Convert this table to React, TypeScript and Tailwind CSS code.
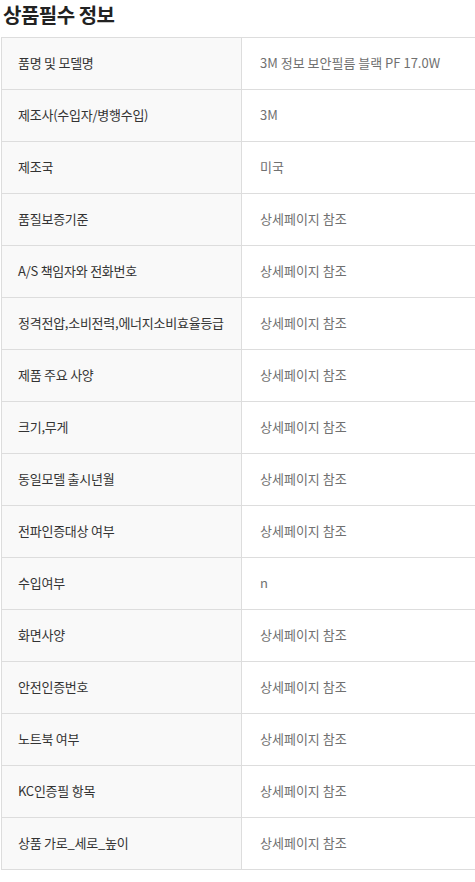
import React from "react";

const rows: [string, string][] = [
  ["품명 및 모델명", "3M 정보 보안필름 블랙 PF 17.0W"],
  ["제조사(수입자/병행수입)", "3M"],
  ["제조국", "미국"],
  ["품질보증기준", "상세페이지 참조"],
  ["A/S 책임자와 전화번호", "상세페이지 참조"],
  ["정격전압,소비전력,에너지소비효율등급", "상세페이지 참조"],
  ["제품 주요 사양", "상세페이지 참조"],
  ["크기,무게", "상세페이지 참조"],
  ["동일모델 출시년월", "상세페이지 참조"],
  ["전파인증대상 여부", "상세페이지 참조"],
  ["수입여부", "n"],
  ["화면사양", "상세페이지 참조"],
  ["안전인증번호", "상세페이지 참조"],
  ["노트북 여부", "상세페이지 참조"],
  ["KC인증필 항목", "상세페이지 참조"],
  ["상품 가로_세로_높이", "상세페이지 참조"],
];

export default function App() {
  return (
    <div
      className="w-[475px] h-[882px] overflow-hidden bg-white"
      style={{ fontFamily: '"Noto Sans CJK KR", "Noto Sans", sans-serif' }}
    >
      <h2 className="pl-[3px] h-[37px] pt-[1px] text-[20px] leading-[28px] font-bold text-[#222] tracking-[-0.5px]">
        상품필수 정보
      </h2>
      <div className="ml-[1px] w-[520px] border-t border-l border-[#dddddd]">
        {rows.map(([k, v], i) => (
          <div key={i} className="flex h-[52px] border-b border-[#dddddd]">
            <div className="w-[240px] shrink-0 bg-[#f9f9f9] border-r border-[#dddddd] flex items-center pl-[16px] pb-[2px] text-[13px] text-[#333] tracking-[-0.25px]">
              {k}
            </div>
            <div className="flex-1 flex items-center pl-[18px] pb-[2px] text-[13px] text-[#707070]">
              {v}
            </div>
          </div>
        ))}
      </div>
    </div>
  );
}
